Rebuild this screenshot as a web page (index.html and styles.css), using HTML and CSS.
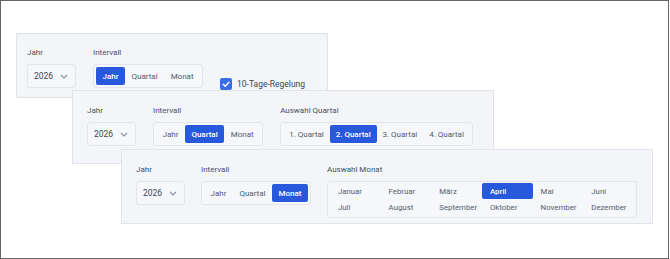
FILE: index.html
```html
<!DOCTYPE html>
<html lang="de">
<head>
<meta charset="utf-8">
<title>Zeitraum-Auswahl</title>
<link rel="stylesheet" href="styles.css">
</head>
<body>
<div class="frame">
  <section class="panel panel-1">
    <div class="field">
      <span class="label">Jahr</span>
      <div class="select">2026 <svg class="chev" viewBox="0 0 8 5" width="8" height="5"><path d="M1 1l3 3 3-3" fill="none" stroke="#8a90a0" stroke-width="1.1"/></svg></div>
    </div>
    <div class="field">
      <span class="label">Intervall</span>
      <div class="seg">
        <span class="btn active">Jahr</span><span class="btn">Quartal</span><span class="btn">Monat</span>
      </div>
    </div>
    <label class="check">
      <span class="box"><svg viewBox="0 0 12 12" width="12" height="12"><path d="M3.2 6.2l2 2 3.8-4" fill="none" stroke="#fff" stroke-width="1.4" stroke-linecap="round" stroke-linejoin="round"/></svg></span>
      10-Tage-Regelung
    </label>
  </section>

  <section class="panel panel-2">
    <div class="field">
      <span class="label">Jahr</span>
      <div class="select">2026 <svg class="chev" viewBox="0 0 8 5" width="8" height="5"><path d="M1 1l3 3 3-3" fill="none" stroke="#8a90a0" stroke-width="1.1"/></svg></div>
    </div>
    <div class="field">
      <span class="label">Intervall</span>
      <div class="seg">
        <span class="btn">Jahr</span><span class="btn active">Quartal</span><span class="btn">Monat</span>
      </div>
    </div>
    <div class="field">
      <span class="label">Auswahl Quartal</span>
      <div class="seg seg-q">
        <span class="btn">1. Quartal</span><span class="btn active">2. Quartal</span><span class="btn">3. Quartal</span><span class="btn">4. Quartal</span>
      </div>
    </div>
  </section>

  <section class="panel panel-3">
    <div class="field">
      <span class="label">Jahr</span>
      <div class="select">2026 <svg class="chev" viewBox="0 0 8 5" width="8" height="5"><path d="M1 1l3 3 3-3" fill="none" stroke="#8a90a0" stroke-width="1.1"/></svg></div>
    </div>
    <div class="field">
      <span class="label">Intervall</span>
      <div class="seg">
        <span class="btn">Jahr</span><span class="btn">Quartal</span><span class="btn active">Monat</span>
      </div>
    </div>
    <div class="field">
      <span class="label">Auswahl Monat</span>
      <div class="months">
        <span class="month">Januar</span><span class="month">Februar</span><span class="month">März</span><span class="month active">April</span><span class="month">Mai</span><span class="month">Juni</span>
        <span class="month">Juli</span><span class="month">August</span><span class="month">September</span><span class="month">Oktober</span><span class="month">November</span><span class="month">Dezember</span>
      </div>
    </div>
  </section>
</div>
</body>
</html>
```

FILE: styles.css
```css
* { box-sizing: border-box; }
html, body { margin: 0; padding: 0; background: #fff; }
body { font-family: Roboto, "Noto Sans", sans-serif; color: #4f5664; }

.frame {
  position: relative;
  width: 669px;
  height: 259px;
  border: 1px solid #666;
  background: #fff;
}

.panel {
  position: absolute;
  display: flex;
  align-items: flex-start;
  gap: 17px;
  background: #f4f5f9;
  border: 1px solid #e2e4ea;
}
.panel-1 { left: 15px; top: 32px; width: 312px; height: 65px; padding: 13px 0 0 10px; }
.panel-2 { left: 71px; top: 89px; width: 422px; height: 74px; padding: 14px 0 0 14px; }
.panel-3 { left: 120px; top: 148px; width: 532px; height: 75px; padding: 14px 0 0 14px; gap: 16px; }

.field { display: flex; flex-direction: column; gap: 6px; }
.label { font-size: 8px; line-height: 11px; color: #4a505c; }

.select {
  width: 49px;
  height: 24px;
  display: flex;
  align-items: center;
  justify-content: space-between;
  padding: 0 7px 0 6px;
  border: 1px solid #e3e5ea;
  border-radius: 3px;
  background: #f6f7fa;
  font-size: 8.5px;
  color: #3d4350;
}
.chev { display: block; }

.seg {
  display: flex;
  height: 24px;
  padding: 2px;
  border: 1px solid #e3e5ea;
  border-radius: 3px;
  background: #f6f7fa;
}
.btn {
  display: flex;
  align-items: center;
  padding: 0 6.5px;
  border-radius: 2px;
  font-size: 8px;
  color: #555c6a;
}
.seg-q .btn { width: 46.7px; justify-content: center; padding: 0; }
.btn.active { background: #2859dc; color: #fff; font-weight: 500; }

.check {
  align-self: flex-end;
  display: flex;
  align-items: center;
  gap: 5px;
  margin-bottom: 7px;
  font-size: 8.5px;
  color: #3f4552;
}
.box {
  width: 12px;
  height: 12px;
  border-radius: 2px;
  background: #3a6ee3;
  display: flex;
}

.months {
  width: 310px;
  display: grid;
  grid-template-columns: repeat(6, 1fr);
  grid-auto-rows: 16px;
  padding: 1px 2px 2px;
  border: 1px solid #e3e5ea;
  border-radius: 3px;
  background: #f6f7fa;
}
.month {
  display: flex;
  align-items: center;
  padding-left: 8px;
  border-radius: 2px;
  font-size: 7.8px;
  color: #555c6a;
}
.month.active { background: #2859dc; color: #fff; font-weight: 500; }
```
